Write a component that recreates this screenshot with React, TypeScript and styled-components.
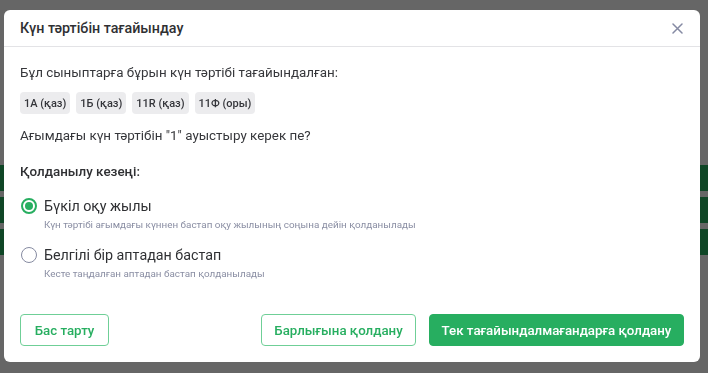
import React from 'react';
import styled, { createGlobalStyle } from 'styled-components';

const GlobalStyle = createGlobalStyle`
    html, body {
        margin: 0;
        padding: 0;
        background: #ffffff;
        font-family: Roboto, "Noto Sans", "DejaVu Sans", sans-serif;
    }
    * {
        box-sizing: border-box;
    }
`

const Page = styled.div`
    width: 708px;
    height: 373px;
    padding-top: 165px;
    display: flex;
    flex-direction: column;
    gap: 6px;
`

const TableRow = styled.div`
    height: 26px;
    display: flex;
    justify-content: space-between;
`

const Cell = styled.div<{ $w: number }>`
    width: ${p => p.$w}px;
    height: 100%;
    background: #27ae60;
`

const Overlay = styled.div`
    position: fixed;
    inset: 0;
    background: rgba(0, 0, 0, 0.6);
    display: flex;
    align-items: flex-start;
    padding: 10px 0 0 4px;
`

const Modal = styled.div`
    width: 696px;
    height: 352px;
    background: #ffffff;
    border-radius: 6px;
    display: flex;
    flex-direction: column;
`

const Header = styled.div`
    height: 37px;
    padding: 0 16px;
    border-bottom: 1px solid #e3e3e6;
    display: flex;
    align-items: center;
    justify-content: space-between;
`

const Title = styled.h2`
    margin: 0;
    font-size: 14.3px;
    font-weight: 500;
    color: #2f3033;
`

const CloseButton = styled.button`
    border: none;
    background: transparent;
    padding: 0;
    width: 14px;
    height: 14px;
    display: flex;
    align-items: center;
    justify-content: center;
    cursor: pointer;
`

const Body = styled.div`
    padding: 16px 16px 0;
    flex: 1;
`

const Text = styled.p<{ $mt?: number }>`
    margin: ${p => p.$mt ?? 0}px 0 0;
    font-size: 13.4px;
    line-height: 20px;
    color: #36373b;
`

const SectionLabel = styled.p`
    margin: 16px 0 0;
    font-size: 13.4px;
    line-height: 20px;
    font-weight: 500;
    color: #2f3033;
`

const Chips = styled.div`
    display: flex;
    gap: 6px;
    margin-top: 9px;
`

const Chip = styled.span`
    height: 22px;
    padding: 0 4px;
    border-radius: 4px;
    background: #ececee;
    color: #34353a;
    font-size: 11px;
    font-weight: 500;
    display: flex;
    align-items: center;
`

const Options = styled.div`
    margin-top: 14px;
    display: flex;
    flex-direction: column;
    gap: 12px;
`

const Option = styled.label`
    display: flex;
    flex-direction: column;
    cursor: pointer;
`

const OptionRow = styled.div`
    display: flex;
    align-items: center;
    gap: 7px;
    height: 20px;
`

const Radio = styled.span<{ $checked?: boolean }>`
    width: 16px;
    height: 16px;
    margin-left: 1px;
    border-radius: 50%;
    border: ${p => (p.$checked ? '2px solid #27ae60' : '1.5px solid #858aa0')};
    display: flex;
    align-items: center;
    justify-content: center;

    &::after {
        content: '';
        width: 8px;
        height: 8px;
        border-radius: 50%;
        background: ${p => (p.$checked ? '#27ae60' : 'transparent')};
    }
`

const OptionLabel = styled.span`
    font-size: 14.3px;
    color: #2f3033;
`

const OptionHint = styled.span`
    margin: 1px 0 0 24px;
    font-size: 9.9px;
    line-height: 16px;
    color: #8a8ea3;
`

const Footer = styled.div`
    padding: 0 16px 16px;
    display: flex;
    align-items: center;
    justify-content: space-between;
`

const FooterRight = styled.div`
    display: flex;
    gap: 13px;
`

const Button = styled.button<{ $primary?: boolean; $w: number }>`
    width: ${p => p.$w}px;
    height: 32px;
    padding: 0;
    border-radius: 4px;
    font-family: inherit;
    font-size: 13.3px;
    font-weight: 500;
    white-space: nowrap;
    cursor: pointer;
    border: 1px solid ${p => (p.$primary ? '#27ae60' : '#6fcf97')};
    background: ${p => (p.$primary ? '#27ae60' : '#ffffff')};
    color: ${p => (p.$primary ? '#ffffff' : '#27ae60')};
`

const rows = [0, 1, 2]

export default function App() {
    return (
        <>
            <GlobalStyle />
            <Page>
                {rows.map(i => (
                    <TableRow key={i}>
                        <Cell $w={4} />
                        <Cell $w={8} />
                    </TableRow>
                ))}
            </Page>
            <Overlay>
                <Modal>
                    <Header>
                        <Title>Күн тәртібін тағайындау</Title>
                        <CloseButton aria-label="close">
                            <svg width="11" height="11" viewBox="0 0 11 11">
                                <path d="M1 1L10 10M10 1L1 10" stroke="#858aa3" strokeWidth="1.5" strokeLinecap="round" />
                            </svg>
                        </CloseButton>
                    </Header>
                    <Body>
                        <Text>Бұл сыныптарға бұрын күн тәртібі тағайындалған:</Text>
                        <Chips>
                            <Chip>1А (қаз)</Chip>
                            <Chip>1Б (қаз)</Chip>
                            <Chip>11R (қаз)</Chip>
                            <Chip>11Ф (оры)</Chip>
                        </Chips>
                        <Text $mt={12}>Ағымдағы күн тәртібін "1" ауыстыру керек пе?</Text>
                        <SectionLabel>Қолданылу кезеңі:</SectionLabel>
                        <Options>
                            <Option>
                                <OptionRow>
                                    <Radio $checked />
                                    <OptionLabel>Бүкіл оқу жылы</OptionLabel>
                                </OptionRow>
                                <OptionHint>Күн тәртібі ағымдағы күннен бастап оқу жылының соңына дейін қолданылады</OptionHint>
                            </Option>
                            <Option>
                                <OptionRow>
                                    <Radio />
                                    <OptionLabel>Белгілі бір аптадан бастап</OptionLabel>
                                </OptionRow>
                                <OptionHint>Кесте таңдалған аптадан бастап қолданылады</OptionHint>
                            </Option>
                        </Options>
                    </Body>
                    <Footer>
                        <Button $w={89}>Бас тарту</Button>
                        <FooterRight>
                            <Button $w={155}>Барлығына қолдану</Button>
                            <Button $primary $w={255}>Тек тағайындалмағандарға қолдану</Button>
                        </FooterRight>
                    </Footer>
                </Modal>
            </Overlay>
        </>
    )
}
